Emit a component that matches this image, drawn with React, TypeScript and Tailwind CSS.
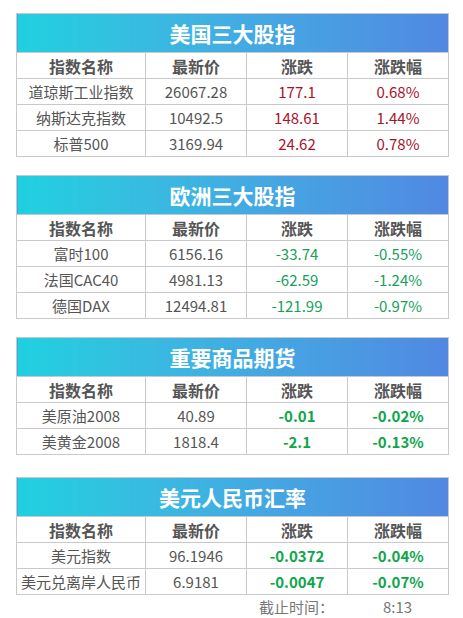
type Row = { name: string; price: string; chg: string; pct: string };

const tables: {
  title: string;
  tone: "red" | "green" | "greenBold";
  rows: Row[];
  gap: string;
}[] = [
  {
    title: "美国三大股指",
    tone: "red",
    gap: "mt-[13px]",
    rows: [
      { name: "道琼斯工业指数", price: "26067.28", chg: "177.1", pct: "0.68%" },
      { name: "纳斯达克指数", price: "10492.5", chg: "148.61", pct: "1.44%" },
      { name: "标普500", price: "3169.94", chg: "24.62", pct: "0.78%" },
    ],
  },
  {
    title: "欧洲三大股指",
    tone: "green",
    gap: "mt-[18px]",
    rows: [
      { name: "富时100", price: "6156.16", chg: "-33.74", pct: "-0.55%" },
      { name: "法国CAC40", price: "4981.13", chg: "-62.59", pct: "-1.24%" },
      { name: "德国DAX", price: "12494.81", chg: "-121.99", pct: "-0.97%" },
    ],
  },
  {
    title: "重要商品期货",
    tone: "greenBold",
    gap: "mt-[18px]",
    rows: [
      { name: "美原油2008", price: "40.89", chg: "-0.01", pct: "-0.02%" },
      { name: "美黄金2008", price: "1818.4", chg: "-2.1", pct: "-0.13%" },
    ],
  },
  {
    title: "美元人民币汇率",
    tone: "greenBold",
    gap: "mt-[22px]",
    rows: [
      { name: "美元指数", price: "96.1946", chg: "-0.0372", pct: "-0.04%" },
      { name: "美元兑离岸人民币", price: "6.9181", chg: "-0.0047", pct: "-0.07%" },
    ],
  },
];

const toneClass = {
  red: "text-[#a8122a]",
  green: "text-[#16a05a]",
  greenBold: "text-[#0ea64a] font-bold",
};

function Block({ t }: { t: (typeof tables)[number] }) {
  const cell = "border border-[#c9c9c9] text-center p-0 h-[26px] leading-[24px]";
  return (
    <table className={`${t.gap} ml-4 w-[432px] border-collapse table-fixed`}>
      <colgroup>
        <col className="w-[129px]" />
        <col className="w-[101px]" />
        <col className="w-[101px]" />
        <col className="w-[101px]" />
      </colgroup>
      <tbody>
        <tr>
          <td
            colSpan={4}
            className="border border-[#c9c9c9] h-[39px] p-0 text-center text-white font-bold text-[21px] leading-[37px] bg-gradient-to-r from-[#1ed0df] to-[#5088e2]"
          >
            {t.title}
          </td>
        </tr>
        <tr className="text-[16px] font-bold text-[#555]">
          <td className={cell}>指数名称</td>
          <td className={cell}>最新价</td>
          <td className={cell}>涨跌</td>
          <td className={cell}>涨跌幅</td>
        </tr>
        {t.rows.map((r) => (
          <tr key={r.name} className="text-[15px] text-[#555]">
            <td className={`${cell} whitespace-nowrap`}>{r.name}</td>
            <td className={cell}>{r.price}</td>
            <td className={`${cell} ${toneClass[t.tone]}`}>{r.chg}</td>
            <td className={`${cell} ${toneClass[t.tone]}`}>{r.pct}</td>
          </tr>
        ))}
      </tbody>
    </table>
  );
}

export default function App() {
  return (
    <div
      className="w-[463px] h-[618px] bg-white overflow-hidden"
      style={{ fontFamily: '"Noto Sans CJK SC", "Noto Sans", sans-serif' }}
    >
      {tables.map((t) => (
        <Block key={t.title} t={t} />
      ))}
      <div className="ml-4 w-[432px] flex h-[24px] items-center text-[15px] text-[#777]">
        <div className="w-[230px]" />
        <div className="w-[101px] text-center">截止时间：</div>
        <div className="w-[101px] text-center">8:13</div>
      </div>
    </div>
  );
}
